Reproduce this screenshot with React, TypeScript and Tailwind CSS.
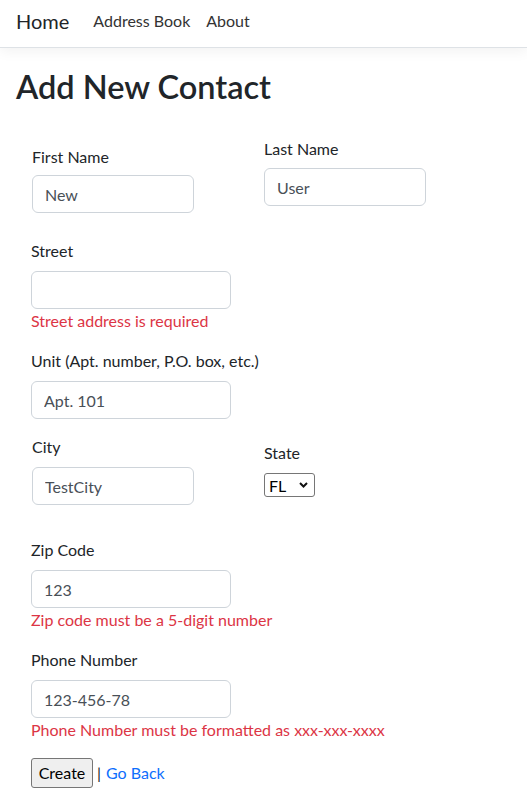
import { useState } from "react";

function Field({ label, value, width, error }: { label: string; value: string; width: string; error?: string }) {
  return (
    <div className="mb-4">
      <label className="block leading-6 mb-2 text-[#212529]">{label}</label>
      <input
        readOnly
        value={value}
        className={`${width} block h-[38px] rounded-[6px] border border-[#ced4da] bg-white px-3 text-base text-[#495057] outline-none`}
      />
      {error && <div className="leading-6 text-[#dc3545]">{error}</div>}
    </div>
  );
}

export default function App() {
  const [state] = useState("FL");

  return (
    <div className="min-h-screen bg-white font-[Lato,'Liberation_Sans',sans-serif] text-base text-[#212529]">
      <nav className="flex h-[48px] items-center border-b border-[#dee2e6] bg-white px-4 pb-[6px] shadow-[0_4px_12px_rgba(0,0,0,0.05)]">
        <a className="mr-6 text-[20px] text-[#212529]">Home</a>
        <a className="mr-4 text-[#333]">Address Book</a>
        <a className="text-[#333]">About</a>
      </nav>

      <div className="px-4">
        <h1 className="mt-[19px] mb-[31px] text-[32.5px] font-semibold leading-[1.2] text-[#212529]">Add New Contact</h1>

        <form className="pl-[15px]">
          <div className="flex items-start">
            <div className="w-[233px] pt-[8px] pl-px">
              <label className="block leading-6 mb-[6px]">First Name</label>
              <input
                readOnly
                value="New"
                className="block h-[38px] w-[162px] rounded-[6px] border border-[#ced4da] px-3 text-[#495057] outline-none"
              />
            </div>
            <div>
              <label className="block leading-6 mb-[7px]">Last Name</label>
              <input
                readOnly
                value="User"
                className="block h-[38px] w-[162px] rounded-[6px] border border-[#ced4da] px-3 text-[#495057] outline-none"
              />
            </div>
          </div>

          <div className="mt-[26px]">
            <Field label="Street" value="" width="w-[200px]" error="Street address is required" />
            <Field label="Unit (Apt. number, P.O. box, etc.)" value="Apt. 101" width="w-[200px]" />
          </div>

          <div className="flex items-start">
            <div className="w-[233px] pl-px">
              <label className="block leading-6 mb-2">City</label>
              <input
                readOnly
                value="TestCity"
                className="block h-[38px] w-[162px] rounded-[6px] border border-[#ced4da] px-3 text-[#495057] outline-none"
              />
            </div>
            <div className="pt-[6px]">
              <label className="block leading-6 mb-[8px]">State</label>
              <div className="relative h-[24px] w-[51px] rounded-[3px] border border-[#767676] bg-white">
                <select
                  value={state}
                  onChange={() => {}}
                  className="h-full w-full appearance-none bg-transparent pl-[4px] leading-[22px] text-black outline-none"
                >
                  <option value="FL">FL</option>
                </select>
                <svg className="pointer-events-none absolute right-[6px] top-[8px]" width="9" height="6" viewBox="0 0 9 6">
                  <path d="M1 1l3.5 3.5L8 1" fill="none" stroke="#111" strokeWidth="2" />
                </svg>
              </div>
            </div>
          </div>

          <div className="mt-[33px]">
            <Field label="Zip Code" value="123" width="w-[200px]" error="Zip code must be a 5-digit number" />
            <Field label="Phone Number" value="123-456-78" width="w-[200px]" error="Phone Number must be formatted as xxx-xxx-xxxx" />
          </div>

          <div className="flex items-center">
            <button
              type="button"
              className="h-[30px] w-[62px] rounded-[3px] border border-[#767676] bg-[#efefef] text-black"
            >
              Create
            </button>
            <span className="ml-[4px] mr-[5px]">|</span>
            <a className="text-[#0d6efd]">Go Back</a>
          </div>
        </form>
      </div>
    </div>
  );
}
